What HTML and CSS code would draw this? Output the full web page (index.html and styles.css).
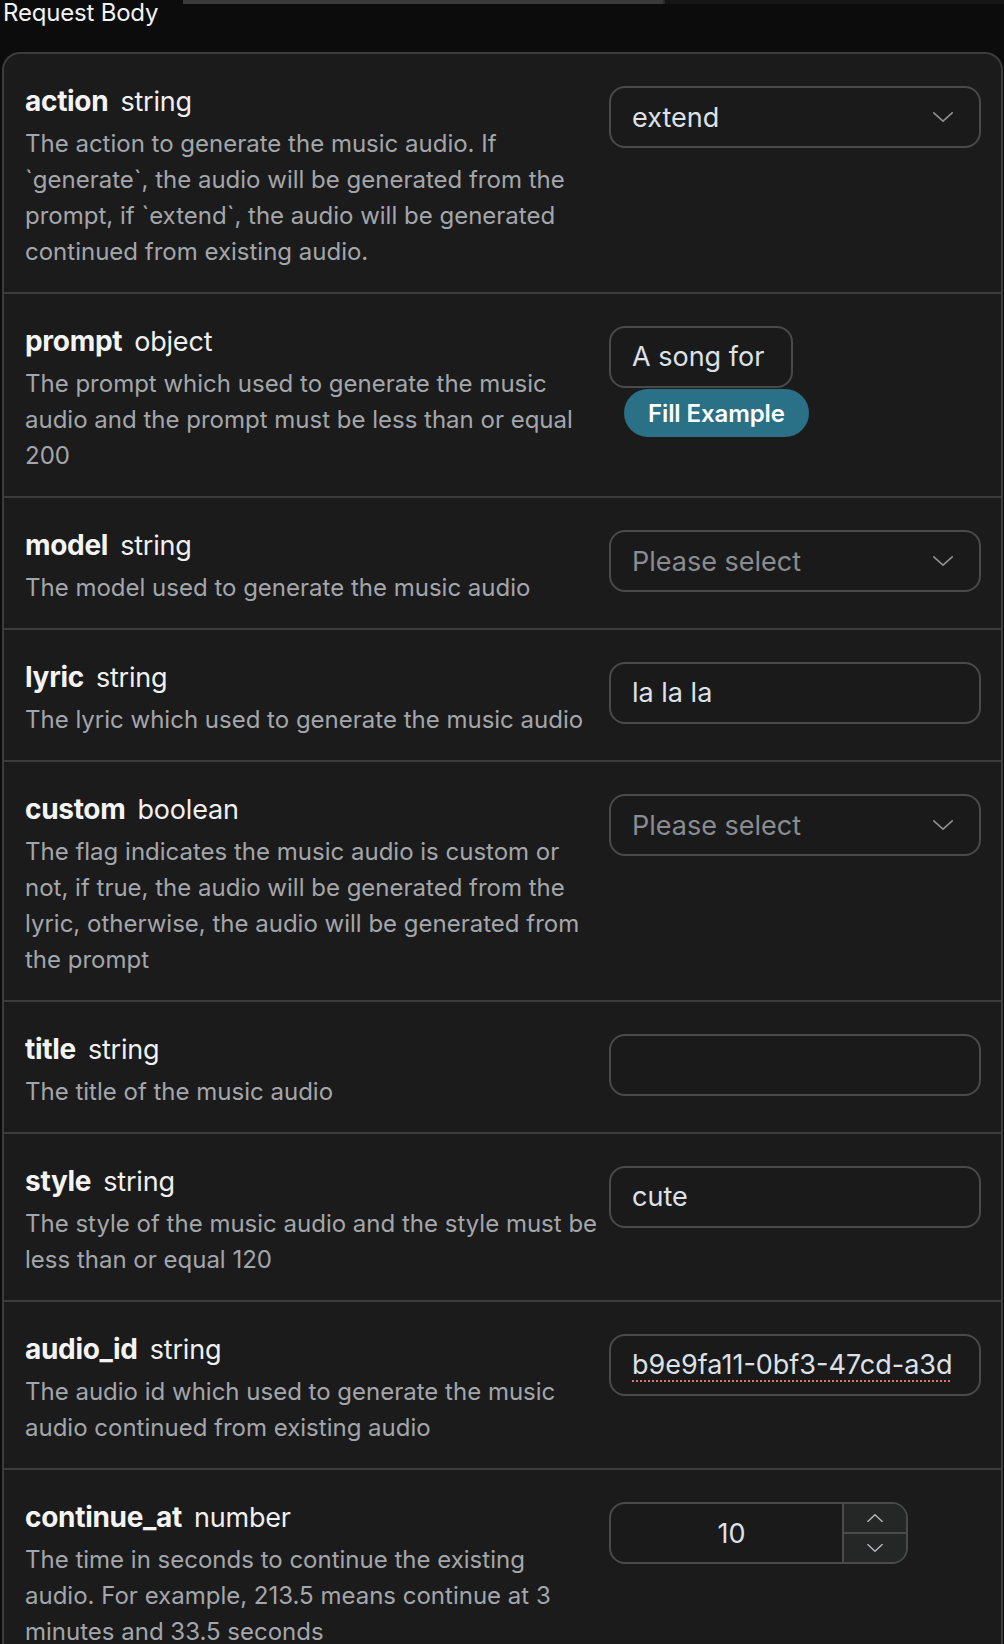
FILE: index.html
```html
<!DOCTYPE html>
<html lang="en">
<head>
<meta charset="utf-8">
<title>Request Body</title>
<link rel="stylesheet" href="styles.css">
</head>
<body>
<div class="topbar"><span class="tb-left"></span><span class="tb-seg"></span><span class="tb-rest"></span></div>
<div class="section-title">Request Body</div>
<div class="card">
  <div class="row">
    <div class="info">
      <div class="head"><span class="name">action</span><span class="type">string</span></div>
      <p class="desc">The action to generate the music audio. If `generate`, the audio will be generated from the prompt, if `extend`, the audio will be generated continued from existing audio.</p>
    </div>
    <div class="control">
      <div class="field select"><span class="value">extend</span><svg class="chev" viewBox="0 0 20 10" width="20" height="10"><polyline points="0.8,0.8 10,9.2 19.2,0.8"/></svg></div>
    </div>
  </div>
  <div class="row">
    <div class="info">
      <div class="head"><span class="name">prompt</span><span class="type">object</span></div>
      <p class="desc">The prompt which used to generate the music audio and the prompt must be less than or equal 200</p>
    </div>
    <div class="control">
      <div class="field short"><span class="clip">A song for c</span></div>
      <button class="fill">Fill Example</button>
    </div>
  </div>
  <div class="row">
    <div class="info">
      <div class="head"><span class="name">model</span><span class="type">string</span></div>
      <p class="desc">The model used to generate the music audio</p>
    </div>
    <div class="control">
      <div class="field select"><span class="value placeholder">Please select</span><svg class="chev" viewBox="0 0 20 10" width="20" height="10"><polyline points="0.8,0.8 10,9.2 19.2,0.8"/></svg></div>
    </div>
  </div>
  <div class="row">
    <div class="info">
      <div class="head"><span class="name">lyric</span><span class="type">string</span></div>
      <p class="desc">The lyric which used to generate the music audio</p>
    </div>
    <div class="control">
      <div class="field"><span class="clip">la la la</span></div>
    </div>
  </div>
  <div class="row">
    <div class="info">
      <div class="head"><span class="name">custom</span><span class="type">boolean</span></div>
      <p class="desc">The flag indicates the music audio is custom or not, if true, the audio will be generated from the lyric, otherwise, the audio will be generated from the prompt</p>
    </div>
    <div class="control">
      <div class="field select"><span class="value placeholder">Please select</span><svg class="chev" viewBox="0 0 20 10" width="20" height="10"><polyline points="0.8,0.8 10,9.2 19.2,0.8"/></svg></div>
    </div>
  </div>
  <div class="row">
    <div class="info">
      <div class="head"><span class="name">title</span><span class="type">string</span></div>
      <p class="desc">The title of the music audio</p>
    </div>
    <div class="control">
      <div class="field"><span class="clip"></span></div>
    </div>
  </div>
  <div class="row">
    <div class="info">
      <div class="head"><span class="name">style</span><span class="type">string</span></div>
      <p class="desc">The style of the music audio and the style must be less than or equal 120</p>
    </div>
    <div class="control">
      <div class="field"><span class="clip">cute</span></div>
    </div>
  </div>
  <div class="row">
    <div class="info">
      <div class="head"><span class="name">audio_id</span><span class="type">string</span></div>
      <p class="desc">The audio id which used to generate the music audio continued from existing audio</p>
    </div>
    <div class="control">
      <div class="field"><span class="clip"><span class="misspelled">b9e9fa11-0bf3-47cd-a3d</span></span></div>
    </div>
  </div>
  <div class="row">
    <div class="info">
      <div class="head"><span class="name">continue_at</span><span class="type">number</span></div>
      <p class="desc">The time in seconds to continue the existing audio. For example, 213.5 means continue at 3 minutes and 33.5 seconds</p>
    </div>
    <div class="control">
      <div class="number">
        <span class="num-value">10</span>
        <span class="stepper">
          <span class="step"><svg viewBox="0 0 16 8" width="16" height="8"><polyline points="0.8,7.4 8,0.8 15.2,7.4"/></svg></span>
          <span class="step down"><svg viewBox="0 0 16 8" width="16" height="8"><polyline points="0.8,0.6 8,7.2 15.2,0.6"/></svg></span>
        </span>
      </div>
    </div>
  </div>
</div>
</body>
</html>
```
FILE: styles.css
```css
html, body {
  margin: 0;
  padding: 0;
  background: #0c0c0c;
  height: 1644px;
  overflow: hidden;
}

body {
  font-family: Inter, "Noto Sans", "Liberation Sans", sans-serif;
  color: #eeeeee;
}

.topbar {
  display: flex;
  height: 4px;
}
.tb-left { width: 183px; background: #0c0c0c; }
.tb-seg { width: 480px; background: #3a3a3a; }
.tb-rest { flex: 1; background: #161616; border-left: 2px solid #2a2a2a; }

.section-title {
  margin-top: -3px;
  padding-left: 3px;
  font-size: 24px;
  line-height: 24px;
  color: #f2f2f2;
  letter-spacing: -0.2px;
}

.card {
  margin: 27px 2px 0 2px;
  width: 997px;
  background: #1b1b1b;
  border: 2px solid #3c3c3c;
  border-radius: 18px;
  overflow: hidden;
}

.row {
  display: grid;
  grid-template-columns: 576px 372px;
  column-gap: 8px;
  padding: 30px 20px 22px 21px;
  border-top: 2px solid #3c3c3c;
}
.row:first-child { border-top: none; padding-top: 30px; }

.head {
  display: flex;
  align-items: baseline;
  gap: 12px;
  height: 34px;
  line-height: 34px;
  margin-bottom: 8px;
  white-space: nowrap;
}
.name {
  font-size: 28px;
  font-weight: 700;
  color: #f4f4f4;
  letter-spacing: -0.3px;
}
.type {
  font-size: 27px;
  font-weight: 400;
  color: #f0f0f0;
  letter-spacing: -0.2px;
}

.desc {
  margin: 0;
  font-size: 24px;
  line-height: 36px;
  color: #a3a6ab;
}

.control {
  display: flex;
  flex-direction: column;
  align-items: flex-start;
  padding-top: 2px;
}

.field {
  box-sizing: border-box;
  width: 372px;
  height: 62px;
  border: 2px solid #4a4a4a;
  border-radius: 16px;
  display: flex;
  align-items: center;
  padding: 0 21px;
  font-size: 27px;
  color: #dde1e8;
  background: #1a1a1a;
}
.field.short { width: 184px; }

.clip {
  display: block;
  flex: 1;
  overflow: hidden;
  white-space: nowrap;
  line-height: 40px;
}

.select { justify-content: space-between; padding-right: 26px; }
.value { white-space: nowrap; }
.placeholder { color: #8b8c90; }

.chev polyline,
.step polyline {
  fill: none;
  stroke: #8f9094;
  stroke-width: 1.6;
  stroke-linecap: round;
  stroke-linejoin: round;
}

.misspelled {
  text-decoration: underline dotted #e57373;
  text-decoration-thickness: 2px;
  text-underline-offset: 6px;
}

.fill {
  margin: 1px 0 0 15px;
  height: 48px;
  padding: 0 24px;
  border: none;
  border-radius: 24px;
  background: #2a7086;
  color: #ffffff;
  font-family: inherit;
  font-size: 24px;
  font-weight: 600;
  letter-spacing: -0.1px;
}

.number {
  box-sizing: border-box;
  width: 299px;
  height: 62px;
  border: 2px solid #4a4a4a;
  border-radius: 16px;
  display: flex;
  overflow: hidden;
  background: #1a1a1a;
}
.num-value {
  flex: 1;
  display: flex;
  align-items: center;
  justify-content: center;
  padding-left: 10px;
  font-size: 27px;
  color: #dde1e8;
}
.stepper {
  width: 62px;
  display: flex;
  flex-direction: column;
  border-left: 2px solid #4a4a4a;
  background: #252727;
}
.step {
  flex: 1;
  display: flex;
  align-items: center;
  justify-content: center;
}
.step.down { border-top: 2px solid #4a4a4a; }
.step polyline { stroke: #b8b9bc; stroke-width: 1.4; }
```
